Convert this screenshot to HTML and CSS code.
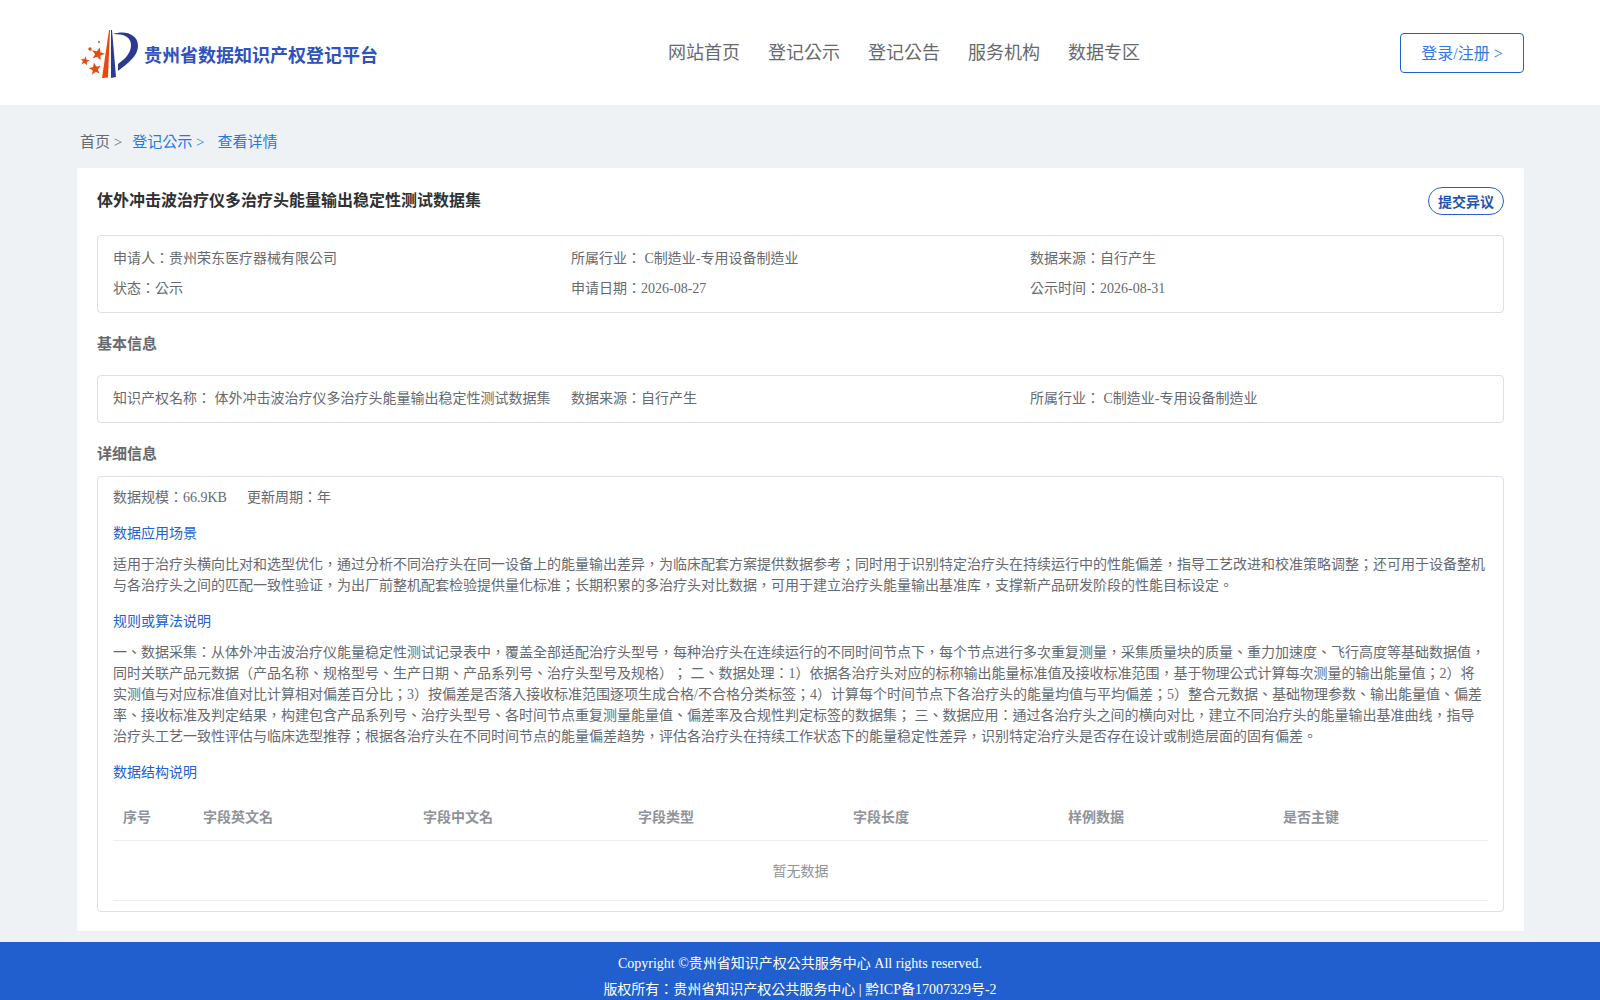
FILE: index.html
```html
<!DOCTYPE html>
<html lang="zh-TW">
<head>
<meta charset="utf-8">
<title>贵州省数据知识产权登记平台</title>
<link rel="stylesheet" href="styles.css">
</head>
<body>
<header class="header">
  <div class="brand">
    <svg class="logo" width="58" height="52" viewBox="79 27 58 52">
      <path d="M108 29 L101 77 L107 76.500 L109 29 Z" fill="#e8490f"/>
      <path d="M110 29 L110 77 L115 76 L111 29 Z" fill="#2b3990"/>
      <path d="M112 33 C124 29 137 33 137 45 C137 55 127 62 117 70 L117 63 C124 58 130 52 130 44 C130 36 123 33 112 33 Z" fill="#2b3990"/>
      <g fill="#e8490f">
        <polygon transform="translate(97 53) rotate(15) scale(7)" points="0,-1 .25,-.33 .95,-.31 .4,.13 .59,.81 0,.42 -.59,.81 -.4,.13 -.95,-.31 -.25,-.33"/>
        <polygon transform="translate(94 68) rotate(-10) scale(6.500)" points="0,-1 .25,-.33 .95,-.31 .4,.13 .59,.81 0,.42 -.59,.81 -.4,.13 -.95,-.31 -.25,-.33"/>
        <polygon transform="translate(84 60) rotate(10) scale(4.800)" points="0,-1 .25,-.33 .95,-.31 .4,.13 .59,.81 0,.42 -.59,.81 -.4,.13 -.95,-.31 -.25,-.33"/>
        <circle cx="89" cy="48" r="1.700"/>
        <circle cx="98" cy="41" r="1"/>
      </g>
    </svg>
    <span class="brand-name">贵州省数据知识产权登记平台</span>
  </div>
  <nav class="nav">
    <a>网站首页</a><a>登记公示</a><a>登记公告</a><a>服务机构</a><a>数据专区</a>
  </nav>
  <a class="login">登录/注册 &gt;</a>
</header>
<main class="main">
  <div class="crumbs">
    <span class="crumb-home">首页 &gt;</span>
    <span class="crumb-link">登记公示 &gt;</span>
    <span class="crumb-link">查看详情</span>
  </div>
  <section class="card">
    <div class="title-row">
      <h1 class="title">体外冲击波治疗仪多治疗头能量输出稳定性测试数据集</h1>
      <a class="objection">提交异议</a>
    </div>
    <div class="box summary">
      <div class="grid3">
        <div>申请人：贵州荣东医疗器械有限公司</div>
        <div>所属行业： C制造业-专用设备制造业</div>
        <div>数据来源：自行产生</div>
        <div>状态：公示</div>
        <div>申请日期：2026-08-27</div>
        <div>公示时间：2026-08-31</div>
      </div>
    </div>
    <h2 class="section-title basic-title">基本信息</h2>
    <div class="box basic">
      <div class="grid3">
        <div>知识产权名称： 体外冲击波治疗仪多治疗头能量输出稳定性测试数据集</div>
        <div>数据来源：自行产生</div>
        <div>所属行业： C制造业-专用设备制造业</div>
      </div>
    </div>
    <h2 class="section-title detail-title">详细信息</h2>
    <div class="box detail">
      <div class="meta"><span>数据规模：66.9KB</span><span>更新周期：年</span></div>
      <h3 class="sub">数据应用场景</h3>
      <p class="para">适用于治疗头横向比对和选型优化，通过分析不同治疗头在同一设备上的能量输出差异，为临床配套方案提供数据参考；同时用于识别特定治疗头在持续运行中的性能偏差，指导工艺改进和校准策略调整；还可用于设备整机与各治疗头之间的匹配一致性验证，为出厂前整机配套检验提供量化标准；长期积累的多治疗头对比数据，可用于建立治疗头能量输出基准库，支撑新产品研发阶段的性能目标设定。</p>
      <h3 class="sub">规则或算法说明</h3>
      <p class="para">一、数据采集：从体外冲击波治疗仪能量稳定性测试记录表中，覆盖全部适配治疗头型号，每种治疗头在连续运行的不同时间节点下，每个节点进行多次重复测量，采集质量块的质量、重力加速度、飞行高度等基础数据值，同时关联产品元数据（产品名称、规格型号、生产日期、产品系列号、治疗头型号及规格）； 二、数据处理：1）依据各治疗头对应的标称输出能量标准值及接收标准范围，基于物理公式计算每次测量的输出能量值；2）将实测值与对应标准值对比计算相对偏差百分比；3）按偏差是否落入接收标准范围逐项生成合格/不合格分类标签；4）计算每个时间节点下各治疗头的能量均值与平均偏差；5）整合元数据、基础物理参数、输出能量值、偏差率、接收标准及判定结果，构建包含产品系列号、治疗头型号、各时间节点重复测量能量值、偏差率及合规性判定标签的数据集； 三、数据应用：通过各治疗头之间的横向对比，建立不同治疗头的能量输出基准曲线，指导治疗头工艺一致性评估与临床选型推荐；根据各治疗头在不同时间节点的能量偏差趋势，评估各治疗头在持续工作状态下的能量稳定性差异，识别特定治疗头是否存在设计或制造层面的固有偏差。</p>
      <h3 class="sub">数据结构说明</h3>
      <table class="fields">
        <thead>
          <tr><th class="c1">序号</th><th class="c2">字段英文名</th><th class="c3">字段中文名</th><th class="c3">字段类型</th><th class="c3">字段长度</th><th class="c3">样例数据</th><th class="c3">是否主键</th></tr>
        </thead>
        <tbody>
          <tr><td class="empty" colspan="7">暂无数据</td></tr>
        </tbody>
      </table>
    </div>
  </section>
</main>
<footer class="footer">
  <div>Copyright ©贵州省知识产权公共服务中心 All rights reserved.</div>
  <div>版权所有：贵州省知识产权公共服务中心 | 黔ICP备17007329号-2</div>
</footer>
</body>
</html>
```

FILE: styles.css
```css
* { box-sizing: border-box; }
html, body { margin: 0; padding: 0; }
body {
  width: 1600px;
  height: 1000px;
  overflow: hidden;
  background: #eff2f5;
  color: #666a70;
  font-family: "Liberation Serif", "Noto Sans CJK TC", serif;
  font-size: 14px;
  text-spacing-trim: space-all;
}
.header {
  height: 105px;
  background: #fff;
  padding: 0 76px 0 80px;
  display: flex;
  align-items: center;
  position: relative;
}
.brand { display: flex; align-items: center; width: 300px; }
.logo { display: block; margin-top: 2px; }
.brand-name {
  margin-left: 6px;
  margin-top: 2px;
  font-size: 18px;
  font-weight: 700;
  color: #2f52bd;
  white-space: nowrap;
  font-family: "Noto Sans CJK TC", sans-serif;
}
.nav { display: flex; gap: 28px; margin-left: 288px; font-size: 18px; color: #666a70; margin-top: -4px; }
.login {
  margin-left: auto;
  width: 124px;
  height: 40px;
  border: 1px solid #2062d0;
  border-radius: 4px;
  color: #2f7ae8;
  font-size: 16px;
  padding-bottom: 1px;
  display: flex;
  align-items: center;
  justify-content: center;
}
.main { padding: 0 76px 0 77px; }
.crumbs { height: 63px; padding: 28px 3px 0; font-size: 15px; line-height: 18px; display: flex; }
.crumb-home { color: #666a70; margin-right: 10px; }
.crumb-link { color: #2379e6; margin-right: 13px; }
.card { background: #fff; padding: 20px 20px 20px; height: 763px; }
.title-row { display: flex; justify-content: space-between; align-items: flex-start; height: 47px; }
.title { margin: 1px 0 0; font-size: 16px; line-height: 24px; font-weight: 700; color: #303133; }
.objection {
  width: 76px;
  height: 28px;
  margin-top: -1px;
  border: 1px solid #2062d0;
  border-radius: 14px;
  color: #1f55b0;
  font-weight: 700;
  display: flex;
  align-items: center;
  justify-content: center;
}
.box { border: 1px solid #dcdfe6; border-radius: 4px; padding: 0 15px; }
.grid3 { display: grid; grid-template-columns: 458px 459px 1fr; }
.summary { height: 78px; padding-top: 8px; }
.summary .grid3 > div { line-height: 30px; }
.section-title { margin: 0; font-size: 15px; font-weight: 700; color: #666a70; line-height: 20px; }
.basic-title { margin-top: 21px; }
.basic { margin-top: 21px; height: 48px; }
.basic .grid3 > div { line-height: 46px; }
.detail-title { margin-top: 21px; }
.detail { margin-top: 12px; height: 436px; }
.meta { display: flex; gap: 20px; line-height: 20px; padding-top: 11px; }
.sub { margin: 16px 0 0; font-size: 14px; font-weight: 400; color: #2062d0; line-height: 20px; }
.para { margin: 10px 0 0; line-height: 21px; }
.fields { width: 100%; border-collapse: collapse; table-layout: fixed; margin-top: 10px; }
.fields th { text-align: left; padding: 0 10px 1px; height: 47px; font-weight: 700; color: #909399; border-bottom: 1px solid #ebeef5; }
.c1 { width: 80px; }
.c2 { width: 220px; }
.empty { height: 60px; text-align: center; color: #909399; border-bottom: 1px solid #ebeef5; }
.footer { position: absolute; left: 0; right: 0; top: 942px; height: 58px; background: #205fcd; color: #fff; text-align: center; line-height: 26px; padding-top: 9px; }
```
